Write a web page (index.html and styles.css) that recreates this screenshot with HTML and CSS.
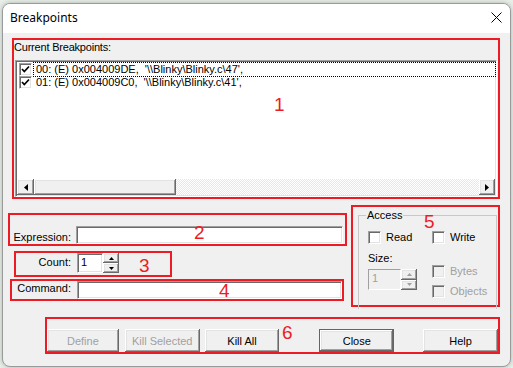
FILE: index.html
```html
<html>
<head>
<title>Breakpoints</title>
<link rel="stylesheet" href="styles.css">
</head>
<body>

<div class="win">

<div class="titlebar">
<span class="title">Breakpoints</span>
<svg class="closeX" width="11" height="11" viewBox="0 0 11 11"><path d="M0.5 0.5 L10.5 10.5 M10.5 0.5 L0.5 10.5" stroke="#000" stroke-width="1" fill="none"/></svg>
</div>

<div class="mark boxList">
<div class="lbl">Current Breakpoints:</div>
<div class="listbox sunken">
<div class="rows">
<div class="item"><span class="chk"><svg width="11" height="11" viewBox="0 0 11 11"><path d="M2 5 L4.3 7.5 L9 2.5" stroke="#000" stroke-width="1.7" fill="none"/></svg></span><span class="itemText focus">00: (E) 0x004009DE,&nbsp; '\\Blinky\Blinky.c\47',</span></div>
<div class="item"><span class="chk"><svg width="11" height="11" viewBox="0 0 11 11"><path d="M2 5 L4.3 7.5 L9 2.5" stroke="#000" stroke-width="1.7" fill="none"/></svg></span><span class="itemText">01: (E) 0x004009C0,&nbsp; '\\Blinky\Blinky.c\41',</span></div>
</div>
<div class="hscroll">
<span class="sbBtn raised"><svg width="4" height="7" viewBox="0 0 4 7"><path d="M4 0 L0 3.5 L4 7 Z" fill="#000"/></svg></span>
<span class="sbThumb raised"></span>
<span class="sbTrack"></span>
<span class="sbBtn sbRight raised"><svg width="4" height="7" viewBox="0 0 4 7"><path d="M0 0 L4 3.5 L0 7 Z" fill="#000"/></svg></span>
</div>
</div>
</div>

<div class="mid">
<div class="fields">
<div class="mark boxExpr">
<span class="flbl lblExpr">Expression:</span>
<div class="edit sunken editExpr"></div>
</div>
<div class="mark boxCount">
<span class="flbl lblCount">Count:</span>
<div class="spin">
<div class="spinEdit sunken">1</div>
<div class="ud">
<span class="udBtn raised"><svg width="5" height="3" viewBox="0 0 5 3"><path d="M2.5 0 L5 3 L0 3 Z" fill="#000"/></svg></span>
<span class="udBtn raised"><svg width="5" height="3" viewBox="0 0 5 3"><path d="M0 0 L5 0 L2.5 3 Z" fill="#000"/></svg></span>
</div>
</div>
</div>
<div class="mark boxCmd">
<span class="flbl lblCmd">Command:</span>
<div class="edit sunken editCmd"></div>
</div>
</div>

<div class="mark boxAccess">
<fieldset class="group">
<legend>Access</legend>
<div class="groupCols">
<div class="gcol">
<div class="cb"><span class="chk"></span>Read</div>
<div class="sizeLbl">Size:</div>
<div class="spin sizeSpin">
<div class="spinEdit sunken off">1</div>
<div class="ud">
<span class="udBtn raised"><svg width="5" height="3" viewBox="0 0 5 3"><path d="M2.5 0 L5 3 L0 3 Z" fill="#a0a0a0"/></svg></span>
<span class="udBtn raised"><svg width="5" height="3" viewBox="0 0 5 3"><path d="M0 0 L5 0 L2.5 3 Z" fill="#a0a0a0"/></svg></span>
</div>
</div>
</div>
<div class="gcol">
<div class="cb"><span class="chk"></span>Write</div>
<div class="cb cbBytes dis"><span class="chk off"></span>Bytes</div>
<div class="cb cbObjects dis"><span class="chk off"></span>Objects</div>
</div>
</div>
</fieldset>
</div>
</div>

<div class="mark boxBtns">
<button class="btn raised dis btnDefine">Define</button>
<button class="btn raised dis btnKillSel">Kill Selected</button>
<button class="btn raised btnKillAll">Kill All</button>
<button class="btn raised default btnClose">Close</button>
<button class="btn raised btnHelp">Help</button>
</div>

<span class="num n1">1</span>
<span class="num n2">2</span>
<span class="num n3">3</span>
<span class="num n4">4</span>
<span class="num n5">5</span>
<span class="num n6">6</span>

</div>

</body>
</html>
```

FILE: styles.css
```css
body{
	margin: 0;
	background: #e8eee8;
	font: 11px "Liberation Sans", Arial, sans-serif;
	color: #000;
}
.win{
	position: relative;
	box-sizing: border-box;
	width: 509px;
	height: 364px;
	margin: 3px 0 0 2px;
	border: 1px solid #9a9a9a;
	border-radius: 8px;
	background: #f0f0f0;
	overflow: hidden;
	box-shadow: 0 0 5px rgba(0,0,0,0.25);
}
.titlebar{
	display: flex;
	align-items: center;
	height: 29px;
	background: #fff;
	padding: 0 8px 0 7px;
}
.title{
	font: 12px "Noto Sans", sans-serif;
	margin-top: -2px;
}
.closeX{
	margin-left: auto;
	margin-top: -3px;
}

/* red marks */
.mark{
	box-sizing: border-box;
	border: 2px solid #ed1c24;
}
.num{
	position: absolute;
	font: 19px/19px "Liberation Sans", Arial, sans-serif;
	color: #ed1c24;
}
.n1{ left: 271px; top: 91px; }
.n2{ left: 191px; top: 219px; }
.n3{ left: 136px; top: 252px; }
.n4{ left: 216px; top: 277px; }
.n5{ left: 421px; top: 208px; }
.n6{ left: 279px; top: 319px; }

/* 3d borders */
.sunken{
	box-sizing: border-box;
	border: 1px solid;
	border-color: #a0a0a0 #fff #fff #a0a0a0;
	box-shadow: inset 1px 1px #696969, inset -1px -1px #e3e3e3;
	background: #fff;
}
.raised{
	box-sizing: border-box;
	background: #f0f0f0;
	box-shadow: inset -1px -1px #696969, inset 1px 1px #fff, inset -2px -2px #a0a0a0, inset 2px 2px #e3e3e3;
}

/* breakpoint list */
.boxList{
	width: 488px;
	height: 161px;
	margin: 5px 0 0 9px;
	padding-top: 1px;
}
.lbl{
	line-height: 13px;
	letter-spacing: -0.2px;
}
.listbox{
	display: flex;
	flex-direction: column;
	width: 482px;
	height: 137px;
	margin: 6px 0 0 1px;
	padding: 1px;
}
.rows{
	flex: 1;
	padding-top: 1px;
}
.item{
	display: flex;
	align-items: center;
	height: 13px;
	line-height: 13px;
	padding-left: 2px;
}
.item .chk{
	margin-right: 2px;
}
.itemText{
	flex: 1;
	padding-left: 2px;
	box-sizing: border-box;
	height: 13px;
}
.focus{
	outline: 1px dotted #000;
	outline-offset: 0;
}
.chk{
	display: inline-flex;
	align-items: center;
	justify-content: center;
	box-sizing: border-box;
	width: 13px;
	height: 13px;
	border: 1px solid;
	border-color: #a0a0a0 #fff #fff #a0a0a0;
	box-shadow: inset 1px 1px #696969, inset -1px -1px #e3e3e3;
	background: #fff;
}
.chk.off{
	background: #f0f0f0;
}
.hscroll{
	display: flex;
	height: 16px;
}
.sbBtn{
	display: flex;
	align-items: center;
	justify-content: center;
	width: 17px;
}
.sbRight{
	width: 16px;
}
.sbThumb{
	width: 142px;
}
.sbTrack{
	flex: 1;
	background: repeating-conic-gradient(#fff 0 25%, #e8e8e8 0 50%) 0 0/2px 2px;
}

/* middle */
.mid{
	display: flex;
	align-items: flex-start;
}
.fields{
	width: 348px;
	display: flex;
	flex-direction: column;
}
.boxExpr, .boxCount, .boxCmd{
	display: flex;
	align-items: flex-start;
}
.flbl{
	line-height: 13px;
	text-align: right;
}
.boxExpr{
	width: 339px;
	height: 33px;
	margin: 14px 0 0 5px;
}
.lblExpr{
	width: 61px;
	margin-top: 16px;
}
.editExpr{
	width: 267px;
	height: 18px;
	margin: 11px 0 0 5px;
}
.boxCount{
	width: 158px;
	height: 26px;
	margin: 5px 0 0 11px;
}
.lblCount{
	width: 55px;
	margin-top: 3px;
}
.boxCount .spin{
	margin-left: 6px;
}
.spin{
	display: flex;
	width: 42px;
	height: 20px;
}
.spinEdit{
	flex: 1;
	padding: 2px 0 0 3px;
	line-height: 13px;
}
.spinEdit.off{
	background: #f0f0f0;
	color: #a0a0a0;
	border-color: #a0a0a0 #fff #fff #a0a0a0;
	box-shadow: none;
}
.ud{
	display: flex;
	flex-direction: column;
	width: 16px;
}
.udBtn{
	flex: 1;
	display: flex;
	align-items: center;
	justify-content: center;
}
.boxCmd{
	width: 334px;
	height: 22px;
	margin: 2px 0 0 7px;
}
.lblCmd{
	width: 59px;
	margin-top: 1px;
}
.editCmd{
	width: 265px;
	height: 18px;
	margin-left: 6px;
}

/* access group */
.boxAccess{
	width: 149px;
	height: 102px;
	margin-top: 6px;
}
.group{
	box-sizing: border-box;
	width: 139px;
	height: 100px;
	margin: 2px 0 0 5px;
	padding: 0 0 0 9px;
	min-width: 0;
	border: 1px solid #c8c8c8;
	border-bottom: none;
}
.group legend{
	padding: 0 1px;
	margin-left: -2px;
	line-height: 13px;
}
.groupCols{
	display: flex;
	margin-top: 9px;
}
.gcol{
	display: flex;
	flex-direction: column;
	width: 66px;
}
.cb{
	display: flex;
	align-items: center;
	height: 13px;
	line-height: 13px;
}
.cb .chk{
	margin-right: 5px;
}
.sizeLbl{
	margin-top: 8px;
	line-height: 13px;
}
.sizeSpin{
	width: 49px;
	height: 21px;
	margin-top: 4px;
}
.cbBytes{
	margin-top: 21px;
}
.cbObjects{
	margin-top: 7px;
}
.dis{
	color: #a0a0a0;
}

/* buttons */
.boxBtns{
	display: flex;
	width: 455px;
	height: 37px;
	margin: 10px 0 0 42px;
	padding-top: 10px;
}
.btn{
	width: 75px;
	height: 23px;
	border: 0;
	padding: 0;
	font: inherit;
	color: #000;
}
.btn.dis{
	color: #a0a0a0;
}
.btnDefine{
	width: 72px;
}
.btnKillSel{
	margin-left: 6px;
}
.btnKillAll{
	margin-left: 5px;
}
.btnClose{
	margin-left: 40px;
}
.btnHelp{
	margin-left: 29px;
}
.btn.default{
	border: 1px solid #646464;
}
```
